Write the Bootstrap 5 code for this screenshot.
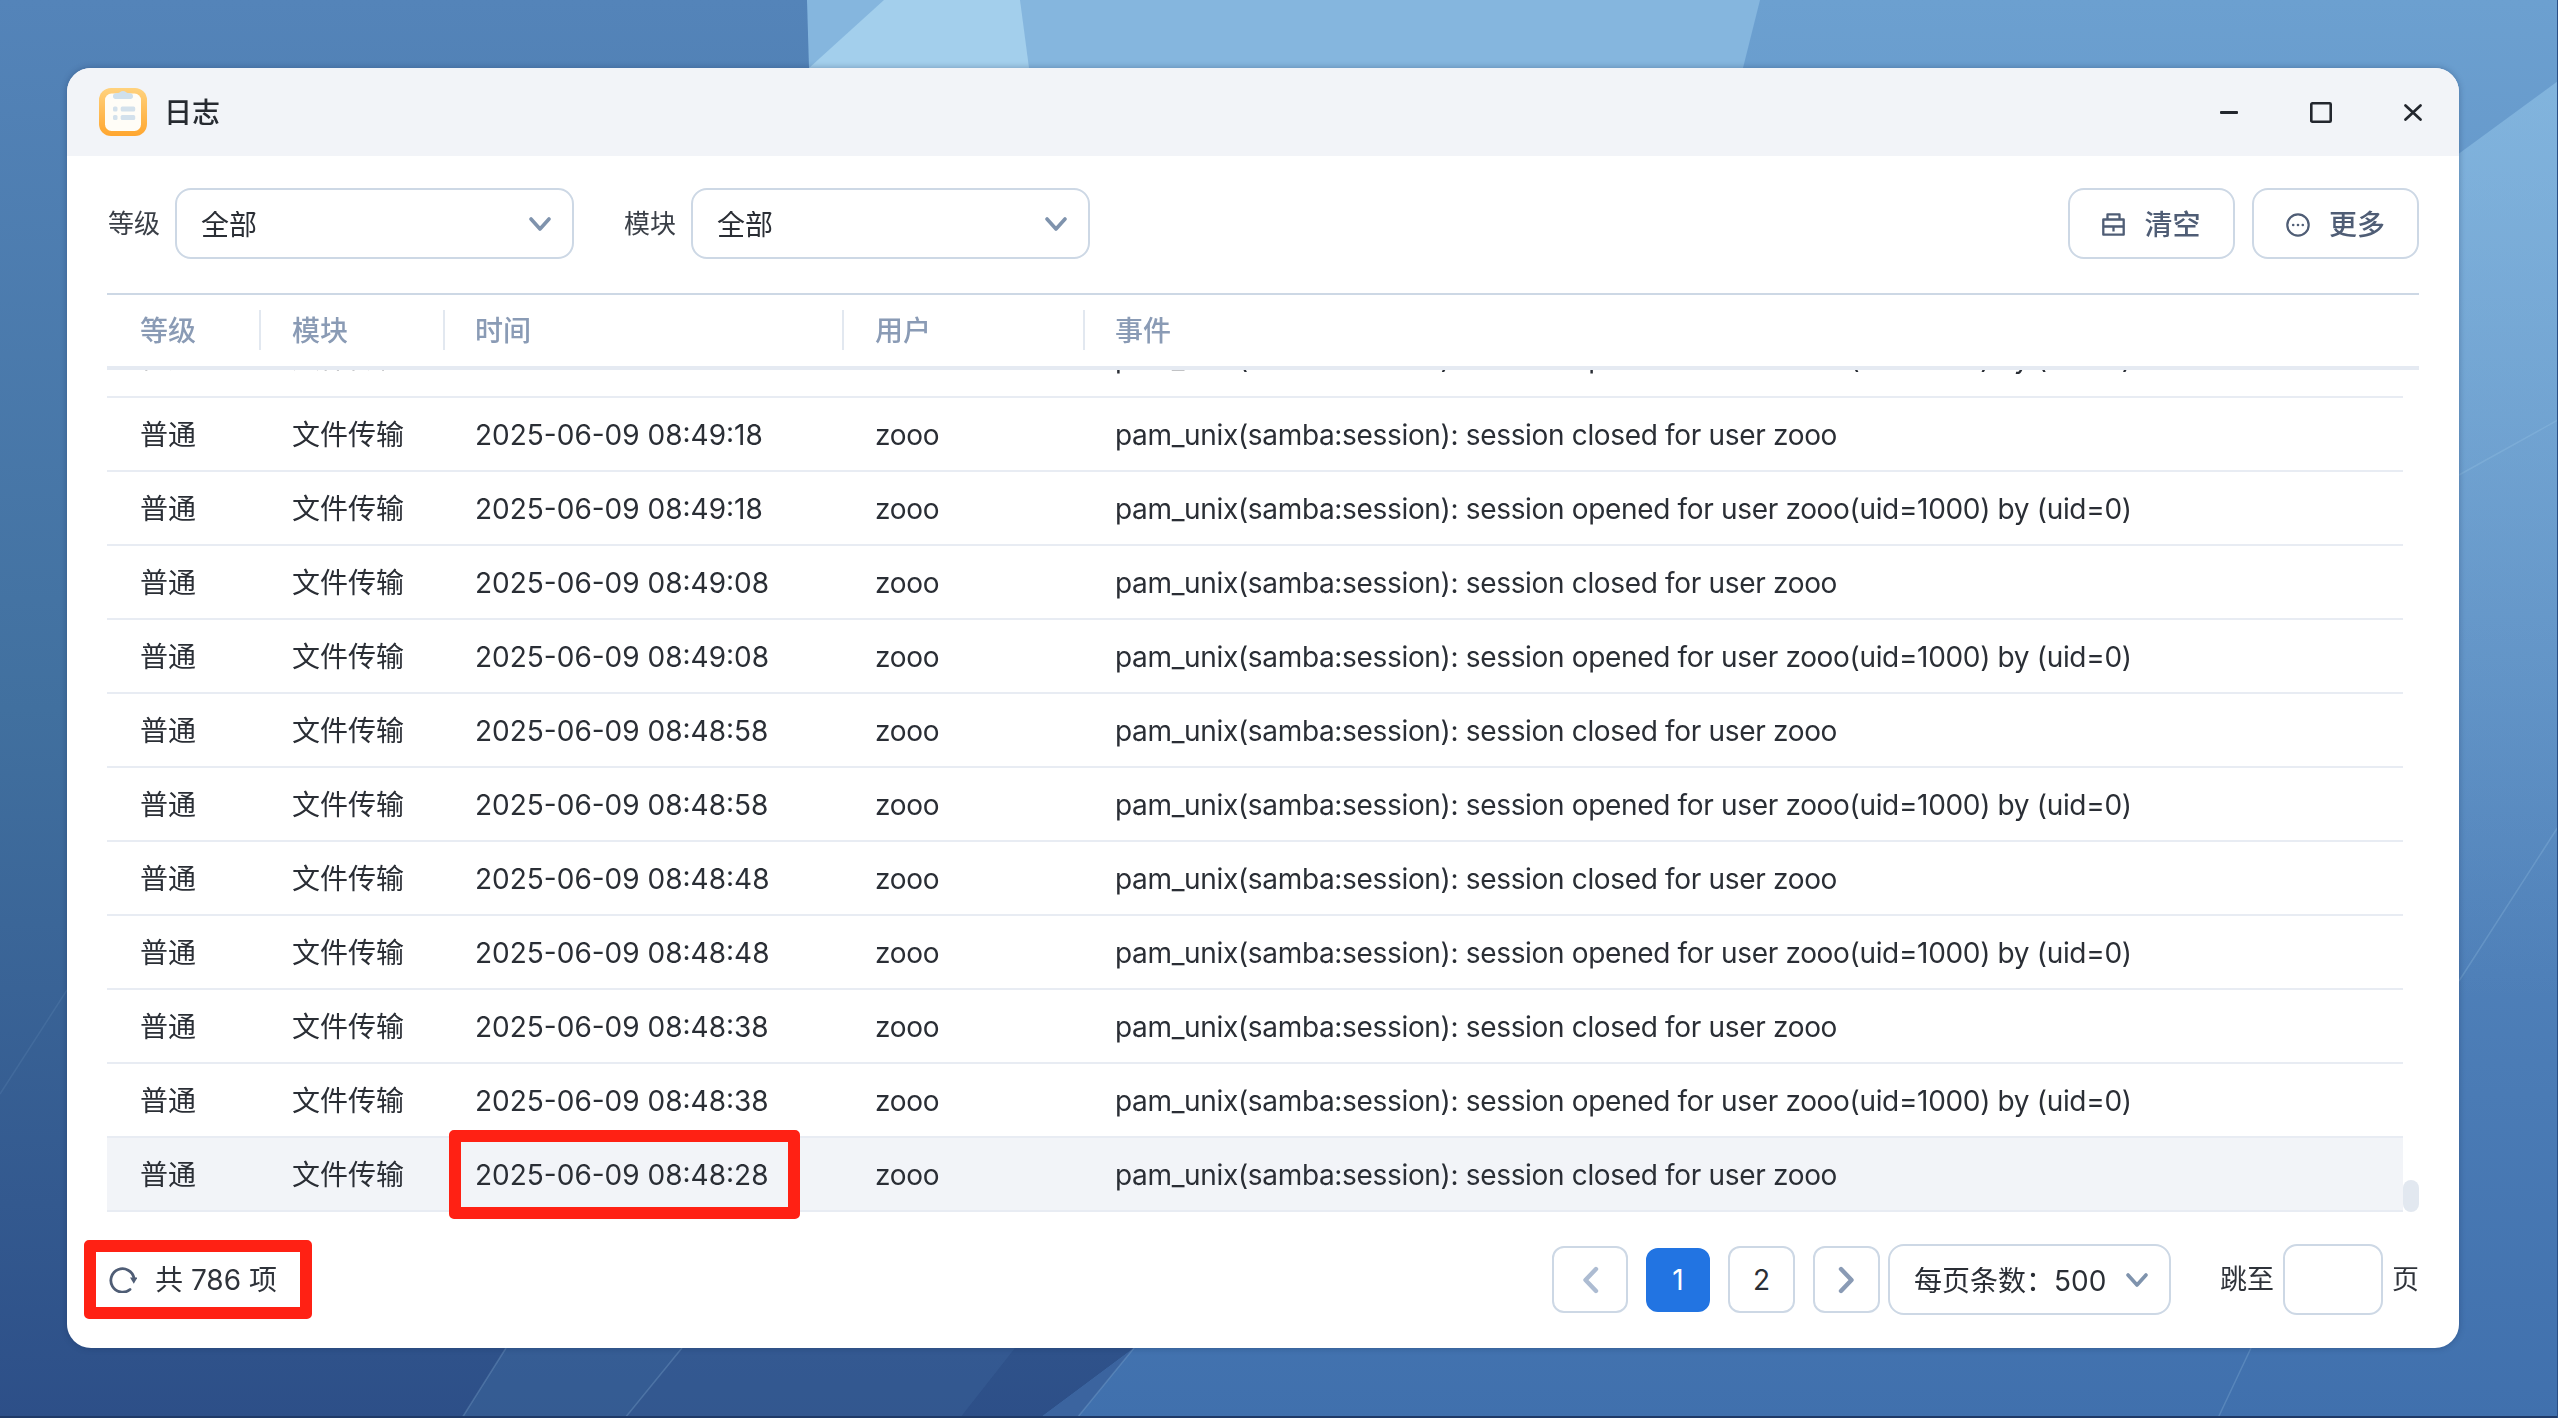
<!DOCTYPE html>
<html lang="zh-CN">
<head>
<meta charset="utf-8">
<title>日志</title>
<link rel="stylesheet" href="https://cdn.jsdelivr.net/npm/bootstrap@5.3.0/dist/css/bootstrap.min.css">
<style>
html,body{height:100%;}
body{font-family:"Inter","Noto Sans CJK SC",sans-serif;font-size:28px;color:#2a2e35;background:#3f6ea5;padding:68px 99px 70px 67px;overflow:hidden;}
.wallpaper{position:fixed;left:0;top:0;width:2558px;height:1418px;z-index:0;}
.app-window{position:relative;z-index:1;width:2392px;height:1280px;background:#fff;border-radius:24px;overflow:hidden;box-shadow:0 0 6px rgba(20,40,80,.35);}
.title-bar{height:88px;background:#f2f4f8;padding-left:32px;}
.title-name{font-size:28px;font-weight:500;color:#262a30;margin-left:17px;padding-top:2px;}
.win-btn{width:92px;height:88px;padding:0;border:0;background:transparent;color:#23272e;}
.tool-row{padding:32px 40px 34px;height:137px;}
.tool-label{font-size:26px;color:#3a3f47;line-height:1;}
.label-first{margin-right:15px;margin-left:1px;}
.label-second{margin-left:50px;margin-right:15px;}
.form-select.picker{--bs-form-select-bg-img:url("data:image/svg+xml,%3csvg xmlns='http://www.w3.org/2000/svg' viewBox='0 0 22 14'%3e%3cpath fill='none' stroke='%237f93ad' stroke-width='3.6' stroke-linecap='round' stroke-linejoin='round' d='M2 2l9 10 9-10'/%3e%3c/svg%3e");height:71px;font-size:28px;color:#2a2e35;border:2px solid #cdd8e5;border-radius:16px;padding:2px 50px 0 24px;background-position:right 21px center;background-size:22px 14px;box-shadow:none;line-height:1;}
.level-pick{width:399px;}
.size-pick{width:283px;margin-left:8px;padding-right:40px;background-position:right 20px center;}
.tool-btn{height:71px;width:167px;font-size:28px;font-weight:500;color:#4f5d75;border:2px solid #cdd8e5;border-radius:16px;background:#fff;padding:2px 0 0;}
.tool-btn+.tool-btn{margin-left:17px;}
.tool-btn svg{margin-right:19px;}
.log-head{margin:0 40px;border-top:2px solid #cdd8e5;border-bottom:4px solid #e5eaf2;height:77px;}
.log-table{table-layout:fixed;width:100%;margin:0;border-collapse:collapse;--bs-table-bg:transparent;--bs-table-color:#2a2e35;}
.log-table .c-level{width:151px;}
.log-table .c-mod{width:184px;}
.log-table .c-time{width:398px;}
.log-table .c-user{width:241px;}
.log-head th{padding:0 0 0 34px;height:71px;font-weight:500;color:#8a9bb5;font-size:28px;border:0;position:relative;white-space:nowrap;box-shadow:none;background:transparent;vertical-align:middle;line-height:1;}
.log-head th.sep::after{content:"";position:absolute;right:-3px;top:15px;bottom:16px;width:2px;background:#e2e8f0;}
.log-head th:nth-child(3).sep::after,.log-head th:nth-child(4).sep::after{right:-4px;}
.log-shell{margin:0 40px;height:842px;}
.log-scroll{flex:1 1 auto;min-width:0;height:842px;overflow:hidden;}
.log-scroll .log-table{margin-top:-47px;}
.log-scroll td{height:74px;padding:2px 0 0 34px;border:0;border-bottom:2px solid #e8ecf3;white-space:nowrap;vertical-align:middle;line-height:1;box-shadow:none;background:transparent;}
.log-scroll td:nth-child(n+4){letter-spacing:-.33px;}
.log-head th:first-child,.log-scroll td:first-child,.log-head th:nth-child(3),.log-scroll td:nth-child(3){padding-left:33px;}
.log-head th:nth-child(4),.log-scroll td:nth-child(4){padding-left:35px;}
.log-scroll tr:first-child td{padding-top:0;padding-bottom:4px;}
.log-scroll tr.row-on td{background:#f2f4f8;}
.bar-track{width:16px;}
.bar-thumb{width:16px;height:32px;background:#e2e8f0;border-radius:8px;}
.foot-row{padding:32px 40px 0 42px;}
.total-text{margin-left:18px;color:#2f333a;}
.pagination.pager{--bs-pagination-font-size:28px;margin:0;gap:18px;}
.pager .page-link{height:67px;width:67px;padding:0;border:2px solid #cdd8e5!important;border-radius:12px!important;color:#2a2e35;background:#fff;margin:0!important;box-shadow:none;}
.pager .page-prev{width:76px;}
.pager .page-item.active .page-link{width:64px;height:64px;background:#2274e2;border-color:#2274e2!important;color:#fff;}
.jump-label{font-size:27px;color:#2f333a;margin-left:49px;margin-right:9px;margin-top:2px;white-space:nowrap;}
.jump-box{width:100px;height:71px;border:2px solid #cdd8e5;border-radius:14px;box-shadow:none;}
.page-unit{font-size:27px;color:#2f333a;margin-left:9px;margin-top:2px;}
.red-mark{position:absolute;border:12px solid #ff2114;border-radius:5px;pointer-events:none;}
.mark-time{left:382px;top:1062px;width:351px;height:89px;}
.mark-total{left:17px;top:1172px;width:228px;height:79px;}
</style>
</head>
<body>
<svg class="wallpaper" viewBox="0 0 2558 1418" preserveAspectRatio="none" aria-hidden="true">
<defs>
<linearGradient id="gl" x1="0" y1="0" x2="0" y2="1"><stop offset="0" stop-color="#5484b9"/><stop offset=".5" stop-color="#41709f"/><stop offset="1" stop-color="#2d4f88"/></linearGradient>
<linearGradient id="gr" x1="0" y1="0" x2="0" y2="1"><stop offset="0" stop-color="#6ca0d0"/><stop offset="1" stop-color="#4070ad"/></linearGradient>
<linearGradient id="gf" x1="0" y1="0" x2="0" y2="1"><stop offset="0" stop-color="#9fd0f0" stop-opacity=".45"/><stop offset="1" stop-color="#9fd0f0" stop-opacity="0"/></linearGradient>
</defs>
<rect width="2558" height="1418" fill="url(#gr)"/>
<polygon points="0,0 807,0 1134,1348 1040,1418 0,1418" fill="url(#gl)"/>
<polygon points="807,0 1760,0 1743,68 809,68" fill="#85b6de"/>
<polygon points="884,0 1020,0 1029,68 809,68" fill="#a3cfec"/>
<polygon points="1040,1418 1077,1418 1134,1348" fill="#3b649f"/>
<polygon points="506,1348 1015,1348 960,1418 462,1418" fill="#4b78b0" opacity=".2"/>
<polygon points="506,1348 682,1348 625,1418 462,1418" fill="#4b78b0" opacity=".12"/>
<polygon points="2300,270 2558,81 2558,1000 2300,1000" fill="url(#gf)"/>
<g stroke="#a9d2ef" stroke-opacity=".22" stroke-width="1.500" fill="none">
<path d="M2459 475L2558 420M2459 981L2558 827M506 1348L462 1418M682 1348L625 1418M1134 1348L1077 1418M2251 1348L2218 1418"/>
</g>
<path d="M0 1094L67 990" stroke="#a9d2ef" stroke-opacity=".1" stroke-width="1.500" fill="none"/>
<rect y="1416" width="2558" height="2" fill="#1f3a68"/>
<rect x="2557" width="1" height="1418" fill="#2a4f86"/>
</svg>

<div class="app-window d-flex flex-column">
  <div class="title-bar d-flex align-items-center flex-shrink-0">
    <svg width="48" height="48" viewBox="0 0 48 48" aria-hidden="true">
      <defs><linearGradient id="ic" x1="0" y1="0" x2="0" y2="1"><stop offset="0" stop-color="#ffd27e"/><stop offset="1" stop-color="#ffa62f"/></linearGradient></defs>
      <rect width="48" height="48" rx="12" fill="url(#ic)"/>
      <rect x="6" y="5.500" width="36" height="37.500" rx="6.500" fill="#fffdf7"/>
      <path d="M14 8.500c0-3 2-3.500 5-3.500 1.500 0 2.500-2 5-2s3.500 2 5 2c3 0 5 .5 5 3.500 0 1.500-1 2.500-2.500 2.500h-15C15 11 14 10 14 8.500z" fill="#cfe0ec"/>
      <rect x="14" y="18.500" width="4.500" height="5" rx="1.500" fill="#d3e1ec"/>
      <rect x="14" y="27" width="4.500" height="5" rx="1.500" fill="#d3e1ec"/>
      <rect x="21.700" y="18.500" width="14.500" height="5" rx="1.500" fill="#d3e1ec"/>
      <rect x="21.700" y="27" width="14.500" height="5" rx="1.500" fill="#d3e1ec"/>
    </svg>
    <span class="title-name">日志</span>
    <div class="ms-auto d-flex">
      <button class="win-btn d-flex align-items-center justify-content-center" type="button" aria-label="最小化"><svg width="18" height="3" viewBox="0 0 18 3"><rect width="18" height="3" rx="1" fill="currentColor"/></svg></button>
      <button class="win-btn d-flex align-items-center justify-content-center" type="button" aria-label="最大化"><svg width="22" height="21" viewBox="0 0 22 21"><rect x="1.300" y="1.300" width="19.400" height="18.400" rx="1" fill="none" stroke="currentColor" stroke-width="2.600"/></svg></button>
      <button class="win-btn d-flex align-items-center justify-content-center" type="button" aria-label="关闭"><svg width="18" height="17" viewBox="0 0 18 17"><path d="M1.500 1.500l15 14M16.500 1.500l-15 14" stroke="currentColor" stroke-width="2.700" stroke-linecap="round" fill="none"/></svg></button>
    </div>
  </div>

  <div class="tool-row d-flex align-items-center flex-shrink-0">
    <span class="tool-label label-first">等级</span>
    <select class="form-select picker level-pick"><option>全部</option></select>
    <span class="tool-label label-second">模块</span>
    <select class="form-select picker level-pick"><option>全部</option></select>
    <div class="ms-auto d-flex">
      <button class="btn tool-btn d-flex align-items-center justify-content-center" type="button">
        <svg width="23" height="23" viewBox="0 0 23 23" aria-hidden="true"><path d="M5.500 6.500V1.300h12v5.200M1.300 6.500h20.400v15.200H1.300zM1.300 13.500h20.400M11.500 13.500v5" fill="none" stroke="currentColor" stroke-width="2.300" stroke-linejoin="round"/></svg>清空</button>
      <button class="btn tool-btn d-flex align-items-center justify-content-center" type="button">
        <svg width="24" height="24" viewBox="0 0 24 24" aria-hidden="true"><circle cx="12" cy="12" r="10.700" fill="none" stroke="currentColor" stroke-width="2.200"/><circle cx="7.200" cy="12" r="1.300" fill="currentColor"/><circle cx="12" cy="12" r="1.300" fill="currentColor"/><circle cx="16.800" cy="12" r="1.300" fill="currentColor"/></svg>更多</button>
    </div>
  </div>

  <div class="log-head flex-shrink-0">
    <table class="table log-table">
      <colgroup><col class="c-level"><col class="c-mod"><col class="c-time"><col class="c-user"><col></colgroup>
      <thead><tr><th class="sep">等级</th><th class="sep">模块</th><th class="sep">时间</th><th class="sep">用户</th><th>事件</th></tr></thead>
    </table>
  </div>

  <div class="log-shell d-flex flex-shrink-0">
    <div class="log-scroll">
      <table class="table log-table">
        <colgroup><col class="c-level"><col class="c-mod"><col class="c-time"><col class="c-user"><col></colgroup>
        <tbody>
          <tr><td>普通</td><td>文件传输</td><td>2025-06-09 08:49:28</td><td>zooo</td><td>pam_unix(samba:session): session opened for user zooo(uid=1000) by (uid=0)</td></tr>
          <tr><td>普通</td><td>文件传输</td><td>2025-06-09 08:49:18</td><td>zooo</td><td>pam_unix(samba:session): session closed for user zooo</td></tr>
          <tr><td>普通</td><td>文件传输</td><td>2025-06-09 08:49:18</td><td>zooo</td><td>pam_unix(samba:session): session opened for user zooo(uid=1000) by (uid=0)</td></tr>
          <tr><td>普通</td><td>文件传输</td><td>2025-06-09 08:49:08</td><td>zooo</td><td>pam_unix(samba:session): session closed for user zooo</td></tr>
          <tr><td>普通</td><td>文件传输</td><td>2025-06-09 08:49:08</td><td>zooo</td><td>pam_unix(samba:session): session opened for user zooo(uid=1000) by (uid=0)</td></tr>
          <tr><td>普通</td><td>文件传输</td><td>2025-06-09 08:48:58</td><td>zooo</td><td>pam_unix(samba:session): session closed for user zooo</td></tr>
          <tr><td>普通</td><td>文件传输</td><td>2025-06-09 08:48:58</td><td>zooo</td><td>pam_unix(samba:session): session opened for user zooo(uid=1000) by (uid=0)</td></tr>
          <tr><td>普通</td><td>文件传输</td><td>2025-06-09 08:48:48</td><td>zooo</td><td>pam_unix(samba:session): session closed for user zooo</td></tr>
          <tr><td>普通</td><td>文件传输</td><td>2025-06-09 08:48:48</td><td>zooo</td><td>pam_unix(samba:session): session opened for user zooo(uid=1000) by (uid=0)</td></tr>
          <tr><td>普通</td><td>文件传输</td><td>2025-06-09 08:48:38</td><td>zooo</td><td>pam_unix(samba:session): session closed for user zooo</td></tr>
          <tr><td>普通</td><td>文件传输</td><td>2025-06-09 08:48:38</td><td>zooo</td><td>pam_unix(samba:session): session opened for user zooo(uid=1000) by (uid=0)</td></tr>
          <tr class="row-on"><td>普通</td><td>文件传输</td><td>2025-06-09 08:48:28</td><td>zooo</td><td>pam_unix(samba:session): session closed for user zooo</td></tr>
        </tbody>
      </table>
    </div>
    <div class="bar-track d-flex align-items-end flex-shrink-0"><div class="bar-thumb"></div></div>
  </div>

  <div class="foot-row d-flex align-items-center justify-content-between">
    <div class="d-flex align-items-center">
      <svg width="28" height="26" viewBox="0 0 28 26" aria-hidden="true"><path d="M21 22.500A11.700 11.700 0 1 1 25 11" fill="none" stroke="#4f5d75" stroke-width="2.800" stroke-linecap="round"/><path d="M21 10.500h7.500l-3.700 6.200z" fill="#4f5d75"/></svg>
      <span class="total-text">共 786 项</span>
    </div>
    <div class="d-flex align-items-center">
      <ul class="pagination pager align-items-center">
        <li class="page-item"><a class="page-link page-prev d-flex align-items-center justify-content-center" href="#" aria-label="上一页"><svg width="17" height="28" viewBox="0 0 17 28"><path d="M14 3L3.500 14 14 25" fill="none" stroke="#adbcd2" stroke-width="4.400" stroke-linecap="round" stroke-linejoin="round"/></svg></a></li>
        <li class="page-item active"><a class="page-link d-flex align-items-center justify-content-center" href="#">1</a></li>
        <li class="page-item"><a class="page-link d-flex align-items-center justify-content-center" href="#">2</a></li>
        <li class="page-item"><a class="page-link d-flex align-items-center justify-content-center" href="#" aria-label="下一页"><svg width="17" height="28" viewBox="0 0 17 28"><path d="M3 3l10.500 11L3 25" fill="none" stroke="#8a9bb5" stroke-width="4.400" stroke-linecap="round" stroke-linejoin="round"/></svg></a></li>
      </ul>
      <select class="form-select picker size-pick"><option>每页条数&#xFF1A;500</option></select>
      <span class="jump-label">跳至</span>
      <input class="form-control jump-box" type="text" aria-label="跳至页码">
      <span class="page-unit">页</span>
    </div>
  </div>

  <div class="red-mark mark-time"></div>
  <div class="red-mark mark-total"></div>
</div>
<script src="https://cdn.jsdelivr.net/npm/bootstrap@5.3.0/dist/js/bootstrap.bundle.min.js"></script>
</body>
</html>
